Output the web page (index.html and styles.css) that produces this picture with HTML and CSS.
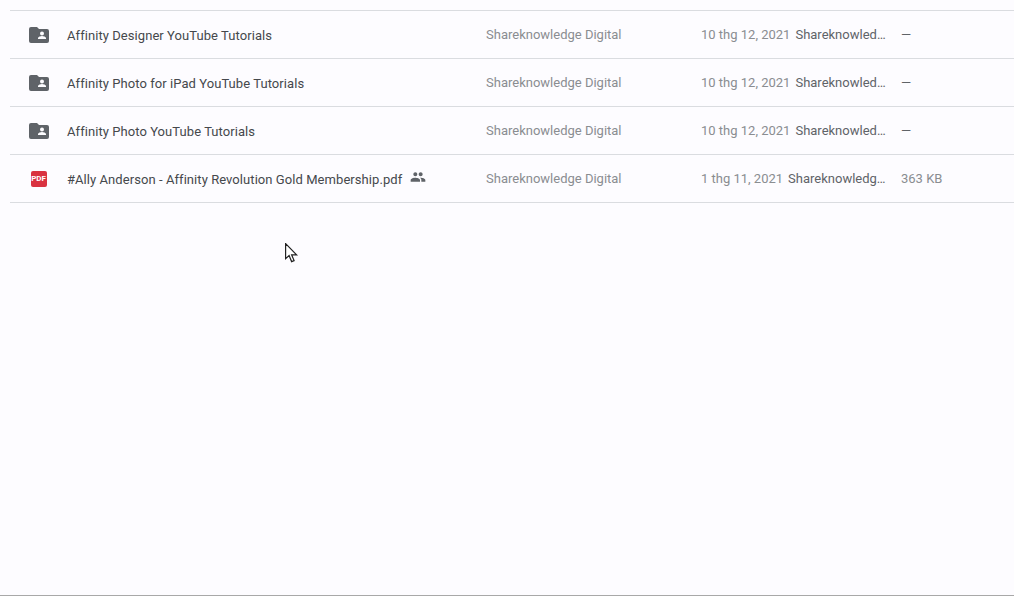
FILE: index.html
```html
<!DOCTYPE html>
<html lang="vi">
  <head>
    <meta charset="UTF-8" />
    <title>Drive</title>
    <link rel="stylesheet" href="styles.css">
  </head>
  <body>
    <div class="list">
      <div class="row">
        <div class="icon">
          <svg class="folder" width="20" height="16" viewBox="0 0 20 16"><path fill="#5f6368" d="M2 0h6l2 2h8a2 2 0 0 1 2 2v10a2 2 0 0 1-2 2H2a2 2 0 0 1-2-2V2a2 2 0 0 1 2-2z"/><circle cx="13" cy="6.5" r="2" fill="#fdfcff"/><path fill="#fdfcff" d="M9 12v-1c0-1.3 2.7-2 4-2s4 .7 4 2v1z"/></svg>
        </div>
        <div class="name">Affinity Designer YouTube Tutorials</div>
        <div class="owner">Shareknowledge Digital</div>
        <div class="modified"><span class="date">10 thg 12, 2021</span><span class="by">Shareknowledge Digital</span></div>
        <div class="size dash">—</div>
      </div>
      <div class="row">
        <div class="icon">
          <svg class="folder" width="20" height="16" viewBox="0 0 20 16"><path fill="#5f6368" d="M2 0h6l2 2h8a2 2 0 0 1 2 2v10a2 2 0 0 1-2 2H2a2 2 0 0 1-2-2V2a2 2 0 0 1 2-2z"/><circle cx="13" cy="6.5" r="2" fill="#fdfcff"/><path fill="#fdfcff" d="M9 12v-1c0-1.3 2.7-2 4-2s4 .7 4 2v1z"/></svg>
        </div>
        <div class="name">Affinity Photo for iPad YouTube Tutorials</div>
        <div class="owner">Shareknowledge Digital</div>
        <div class="modified"><span class="date">10 thg 12, 2021</span><span class="by">Shareknowledge Digital</span></div>
        <div class="size dash">—</div>
      </div>
      <div class="row">
        <div class="icon">
          <svg class="folder" width="20" height="16" viewBox="0 0 20 16"><path fill="#5f6368" d="M2 0h6l2 2h8a2 2 0 0 1 2 2v10a2 2 0 0 1-2 2H2a2 2 0 0 1-2-2V2a2 2 0 0 1 2-2z"/><circle cx="13" cy="6.5" r="2" fill="#fdfcff"/><path fill="#fdfcff" d="M9 12v-1c0-1.3 2.7-2 4-2s4 .7 4 2v1z"/></svg>
        </div>
        <div class="name">Affinity Photo YouTube Tutorials</div>
        <div class="owner">Shareknowledge Digital</div>
        <div class="modified"><span class="date">10 thg 12, 2021</span><span class="by">Shareknowledge Digital</span></div>
        <div class="size dash">—</div>
      </div>
      <div class="row">
        <div class="icon">
          <div class="pdf">PDF</div>
        </div>
        <div class="name">#Ally Anderson - Affinity Revolution Gold Membership.pdf
          <svg class="shared" width="16" height="16" viewBox="0 0 24 24"><path fill="#5f6368" d="M16 11c1.66 0 2.99-1.34 2.99-3S17.66 5 16 5s-3 1.34-3 3 1.34 3 3 3zm-8 0c1.66 0 2.99-1.34 2.99-3S9.66 5 8 5 5 6.34 5 8s1.34 3 3 3zm0 2c-2.33 0-7 1.17-7 3.5V19h14v-2.5C15 14.17 10.33 13 8 13zm8 0c-.29 0-.62.02-.97.05 1.16.84 1.97 1.97 1.97 3.45V19h6v-2.5c0-2.33-4.67-3.5-7-3.5z"/></svg>
        </div>
        <div class="owner">Shareknowledge Digital</div>
        <div class="modified"><span class="date">1 thg 11, 2021</span><span class="by">Shareknowledge Digital</span></div>
        <div class="size">363 KB</div>
      </div>
    </div>

    <!-- con trỏ chuột -->
    <svg class="cursor" width="14" height="20" viewBox="0 0 14 20"><path fill="#fff" stroke="#222" stroke-width="1.2" d="M.6.6v15l3.5-3 2.5 6 2.5-1-2.5-5.8h5z"/></svg>
  </body>
</html>
```

FILE: styles.css
```css
* {
  padding: 0;
  margin: 0;
  box-sizing: border-box;
}

html,
body {
  height: 100%;
}

body {
  position: relative;
  overflow: hidden;
  padding: 10px 0 0 10px;
  background-color: #fdfcff;
  border-bottom: 1px solid #a8a8a8;
  font-family: Roboto, "Liberation Sans", sans-serif;
  font-size: 13px;
}

.list {
  border-top: 1px solid #dadce0;
}

.row {
  display: flex;
  align-items: center;
  height: 48px;
  border-bottom: 1px solid #dadce0;
}

.icon {
  display: flex;
  align-items: center;
  justify-content: center;
  flex: 0 0 57px;
}

.pdf {
  width: 16px;
  height: 16px;
  border-radius: 2px;
  background-color: #d93240;
  color: #fff;
  font-size: 8px;
  font-weight: 700;
  line-height: 16px;
  text-align: center;
}

.name {
  display: flex;
  align-items: center;
  gap: 8px;
  flex: 0 0 419px;
  padding-top: 2px;
  color: #45484c;
  font-weight: 400;
  letter-spacing: 0.065px;
  white-space: nowrap;
}

.shared {
  margin-top: -5px;
}

.owner {
  flex: 0 0 215px;
  color: #8a8d91;
}

.modified {
  display: flex;
  gap: 5px;
  flex: 0 0 191px;
  min-width: 0;
}

.date {
  color: #8a8d91;
  white-space: nowrap;
}

.by {
  min-width: 0;
  color: #5f6368;
  white-space: nowrap;
  overflow: hidden;
  text-overflow: ellipsis;
}

.size {
  flex: 1;
  margin-left: 9px;
  color: #8a8d91;
}

.dash {
  color: #5f6368;
}

.cursor {
  position: absolute;
  left: 285px;
  top: 243px;
}
```
